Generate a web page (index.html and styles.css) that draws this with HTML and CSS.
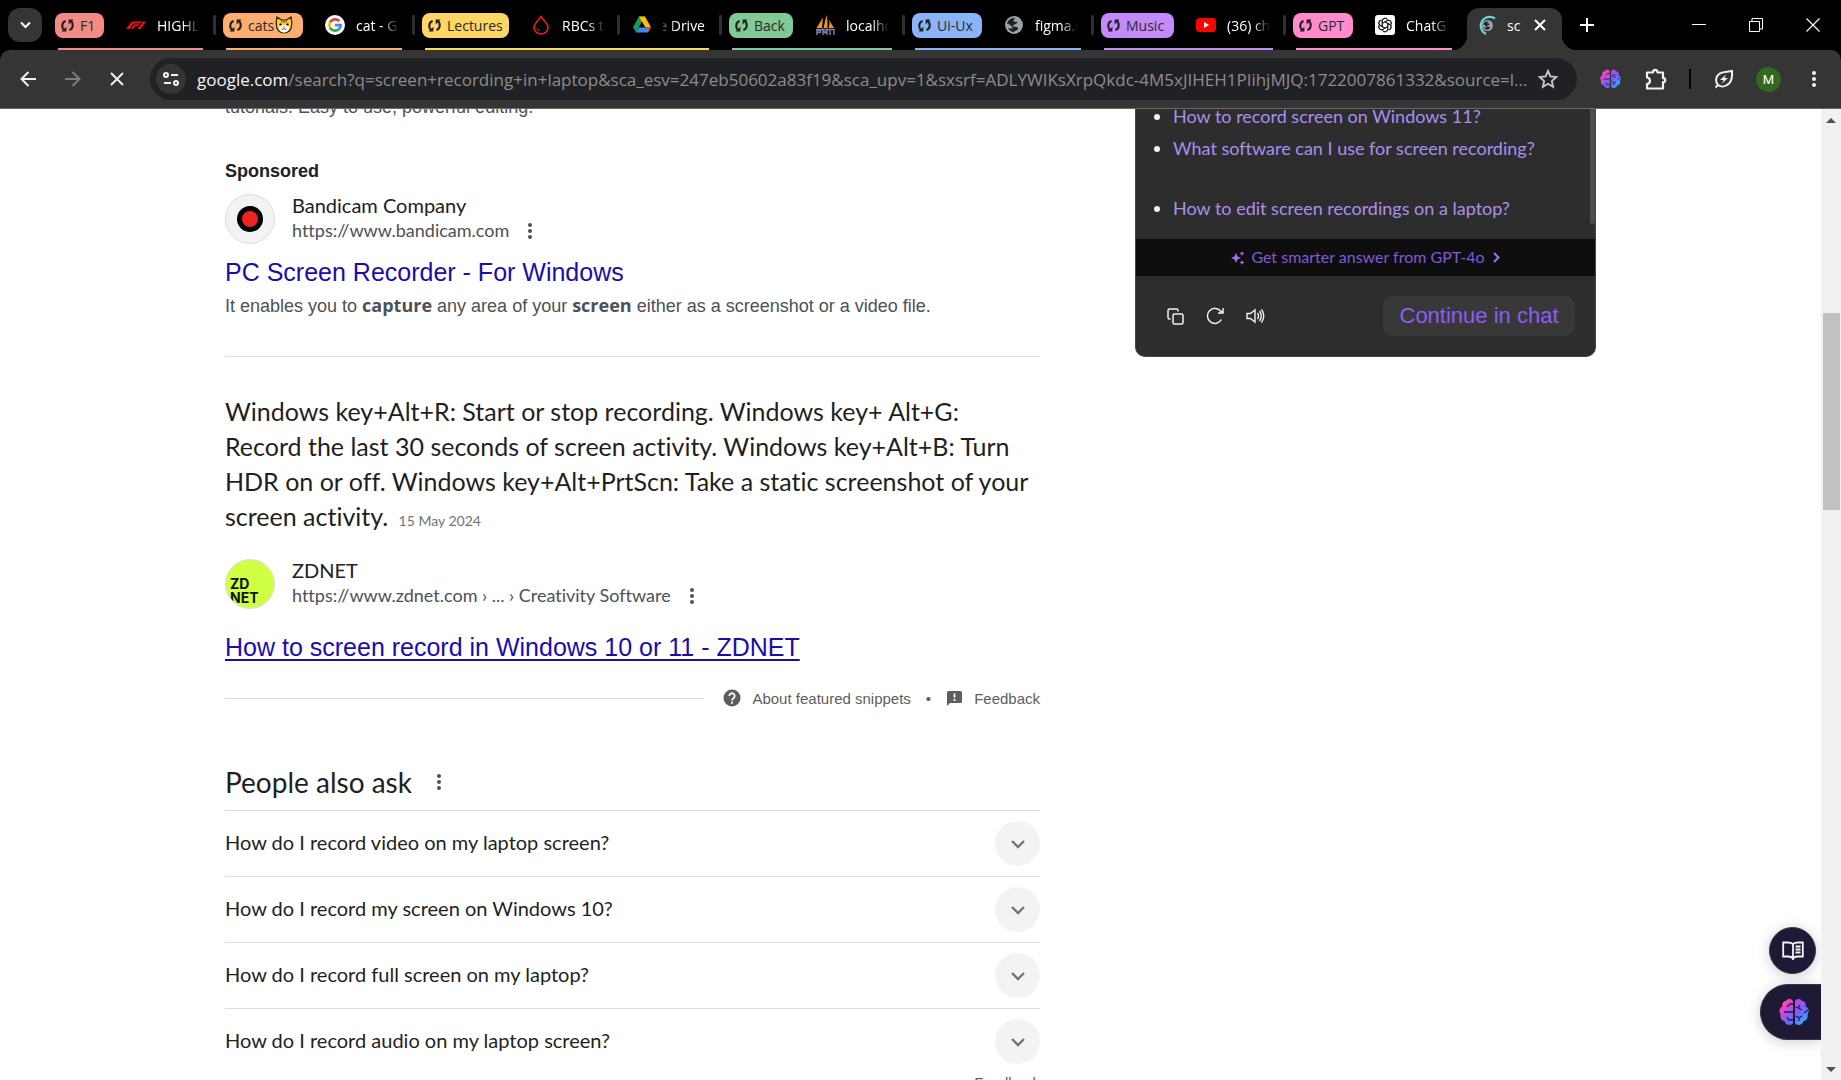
FILE: index.html
```html
<!DOCTYPE html>
<html lang="en">
<head>
<meta charset="utf-8">
<title>screen recording in laptop - Google Search</title>
<link rel="stylesheet" href="styles.css">
</head>
<body>
<svg class="defs" aria-hidden="true">
  <defs>
    <linearGradient id="brain-l" x1="0" y1="0" x2="0.5" y2="1"><stop offset="0" stop-color="#ff9a1f"/><stop offset="0.35" stop-color="#f43fc4"/><stop offset="1" stop-color="#5b6bff"/></linearGradient>
    <linearGradient id="brain-r" x1="0" y1="0" x2="0.6" y2="1"><stop offset="0" stop-color="#d63fe8"/><stop offset="0.5" stop-color="#7a5cff"/><stop offset="1" stop-color="#2fb4ff"/></linearGradient>
    <symbol id="sync" viewBox="0 0 16 16"><g fill="none" stroke="#202124" stroke-width="2.2"><path d="M6 3.2C1.6 4.6 1.400 10.500 4.600 13"/><path d="M10 12.800C14.400 11.400 14.600 5.500 11.400 3"/></g><path d="M1.600 14.300h5.200V9.200zM14.400 1.700H9.200v5.100z" fill="#202124"/></symbol>
    <symbol id="brain" viewBox="0 0 30 28"><path fill="url(#brain-l)" d="M14 3C12 0 8 .5 7 3 4 3 2.500 6 3.500 8.500 0 10-.5 14 1.500 16c-1 4 1.500 7 4 7 1 4 6.500 5.500 8.500 2z"/><path fill="url(#brain-r)" d="M16 3c2-3 6-2.500 7 0 3 0 4.500 3 3.500 5.500C30 10 30.500 14 28.500 16c1 4-1.500 7-4 7-1 4-6.500 5.500-8.500 2z"/><g fill="none" stroke="#2a1a4a" stroke-width="1.300"><path d="M14 6h-3l-3 3M14 14H5M14 22h-4l-2-3M16.500 9l3 1 1-3M19.500 10l3 2M17 18l3 2 3-2M20 20v3M29 12l-4 3"/></g></symbol>
    <symbol id="globe" viewBox="0 0 18 18"><circle cx="9" cy="9" r="9" fill="#9aa0a6"/><path fill="#202124" d="M2 7.500C3 3.500 7 1.500 10.500 2 9 3 8 4 9 5.500c1 1 2-.5 3 .5s-1 2-2.500 2.500S7 10 9 10.500c2 .5 4 0 4 2s-3 2-4 3.500c-3 0-5-2-6-4 1.500.5 3.500 1 4.500 0S5 9.500 4.500 8.500 3 8 2 7.500z"/></symbol>
    <symbol id="more" viewBox="0 0 6 20"><g fill="currentColor"><circle cx="3" cy="4" r="2"/><circle cx="3" cy="10" r="2"/><circle cx="3" cy="16" r="2"/></g></symbol>
    <symbol id="down" viewBox="0 0 16 10"><path d="M2 2l6 6 6-6" fill="none" stroke="currentColor" stroke-width="2.400"/></symbol>
  </defs>
</svg>

<header class="browser">
  <div class="tabstrip">
    <button class="tab-search" aria-label="Search tabs"><svg width="11" height="8" viewBox="0 0 11 8"><path d="M1 1.500l4.500 4.500L10 1.500" fill="none" stroke="#fff" stroke-width="2"/></svg></button>

    <div class="group red w49">
      <button class="chip"><svg class="sync"><use href="#sync"/></svg>F1</button>
      <button class="tab"><svg class="fav" viewBox="0 0 20 20"><path fill="#f01008" d="M0 14L5 7.500Q6 6.500 8 6.500h8L14 8.500H8.500Q7.500 8.500 7 9.300L3.500 14zM4.800 14l3-3.800Q8.500 9.300 9.800 9.300h3.700L12 11H9.500L7 14zM14.500 14L20 6.500h-3L11.500 14z"/></svg><span class="title">HIGHLI</span></button>
    </div>
    <div class="group orange w80">
      <button class="chip"><svg class="sync"><use href="#sync"/></svg>cats<svg class="cat" viewBox="0 0 18 18"><path d="M2 1l4.500 3h5L16 1c1 4 1 6 .5 9 0 4-3.500 7-7.500 7s-7.500-3-7.500-7C1 7 1 5 2 1z" fill="#fdc935" stroke="#2b2110" stroke-width="1.200"/><path d="M9 9c-4 0-6 2-5 4s3 3.500 5 3.500 4-1.500 5-3.500-1-4-5-4z" fill="#fff"/><circle cx="5.500" cy="8.500" r="1.100"/><circle cx="12.500" cy="8.500" r="1.100"/><path d="M7.800 10.500h2.400L9 12z" fill="#c55"/><path d="M6.500 13q1.200 1 2.500-.5 1.300 1.500 2.500.5M9 4.500v2.500M6.800 4.800v1.700M11.200 4.800v1.700" fill="none" stroke="#2b2110" stroke-width=".8"/></svg></button>
      <button class="tab"><svg class="fav" viewBox="0 0 20 20"><circle cx="10" cy="10" r="10" fill="#fff"/><g fill="none" stroke-width="2.700"><path d="M14.200 6.200A5.700 5.700 0 0 0 5 7.400" stroke="#ea4335"/><path d="M5 7.400a5.700 5.700 0 0 0 0 5.200" stroke="#fbbc05"/><path d="M5 12.600a5.700 5.700 0 0 0 8.800 1.600" stroke="#34a853"/><path d="M13.800 14.200A5.500 5.500 0 0 0 15.600 10.200H10" stroke="#4285f4"/></g></svg><span class="title">cat - G</span></button>
    </div>
    <div class="group yellow w87">
      <button class="chip"><svg class="sync"><use href="#sync"/></svg>Lectures</button>
      <button class="tab"><svg class="fav" viewBox="0 0 20 20"><path d="M10 1.500C7 6 3 8.500 3 12.500a7 6.500 0 0 0 14 0C17 8.500 12.500 6 10 1.500z" fill="none" stroke="#ec1c24" stroke-width="1.600"/><path d="M6 13q.5 2.500 3 3" fill="none" stroke="#ec1c24"/></svg><span class="title">RBCs t</span></button>
      <button class="tab second"><svg class="fav" viewBox="0 0 20 20"><path d="M7 1.500h6L7 12 4 17.500 1 12.300z" fill="#0f9d58"/><path d="M7 1.500h6l6 10.700h-6z" fill="#fbbc04"/><path d="M7 12.200h12l-3 5.300H4z" fill="#4285f4"/><path d="M16 12.200h3l-3 5.300z" fill="#ea4335"/><path d="M10 7l-3 5.200h6z" fill="#000"/></svg><span class="title fade-start">e Drive</span></button>
    </div>
    <div class="group green w64">
      <button class="chip"><svg class="sync"><use href="#sync"/></svg>Back</button>
      <button class="tab"><svg class="fav" viewBox="0 0 20 20"><path d="M1.500 13L8 2.500 7 13zM8.500 13L11.500 0q1.500 6 1 13zM13.500 13q2-5 0-9l5.500 9z" fill="#f7941d"/><path d="M1 14.500h18M2 14v6M2 15.500h3.500v2H2M8 20v-5l2 3 2-3v5M15 14v6M19 14v6" fill="none" stroke="#7a78ad" stroke-width="1.500"/></svg><span class="title">localho</span></button>
    </div>
    <div class="group blue w69">
      <button class="chip"><svg class="sync"><use href="#sync"/></svg>Ui-Ux</button>
      <button class="tab"><svg class="fav"><use href="#globe" x="1" y="1" width="18" height="18"/></svg><span class="title">figma.c</span></button>
    </div>
    <div class="group purple w73">
      <button class="chip"><svg class="sync"><use href="#sync"/></svg>Music</button>
      <button class="tab"><svg class="fav" viewBox="0 0 20 20"><rect y="3" width="20" height="14" rx="3.500" fill="#f00"/><path d="M8 7l5 3-5 3z" fill="#fff"/></svg><span class="title">(36) ch</span></button>
    </div>
    <div class="group pink w60">
      <button class="chip"><svg class="sync"><use href="#sync"/></svg>GPT</button>
      <button class="tab"><svg class="fav" viewBox="0 0 20 20"><rect width="20" height="20" rx="3" fill="#fff"/><g fill="none" stroke="#222" stroke-width="1"><path id="petal" d="M7.300 11.500V6a2.900 2.900 0 0 1 5.400-1.400M7.300 8.300L12 5.600a2.800 2.800 0 0 1 4 3.300"/><use href="#petal" transform="rotate(60 10 10)"/><use href="#petal" transform="rotate(120 10 10)"/><use href="#petal" transform="rotate(180 10 10)"/><use href="#petal" transform="rotate(240 10 10)"/><use href="#petal" transform="rotate(300 10 10)"/></g></svg><span class="title">ChatGP</span></button>
    </div>

    <div class="active-tab">
      <svg class="fav" viewBox="0 0 20 20"><use href="#globe" x="5" y="5" width="11" height="11"/><path d="M18 3.500A9 9 0 1 0 9 19" fill="none" stroke="#6fd3e6" stroke-width="2.200"/></svg>
      <span class="title">sc</span>
      <button class="close" aria-label="Close tab"><svg width="12" height="12" viewBox="0 0 12 12"><path d="M1 1l10 10M11 1L1 11" stroke="#fff" stroke-width="2"/></svg></button>
    </div>
    <button class="new-tab" aria-label="New tab"><svg width="14" height="14" viewBox="0 0 14 14"><path d="M7 0v14M0 7h14" stroke="#fff" stroke-width="2"/></svg></button>
    <div class="window-controls">
      <button aria-label="Minimise"><svg width="14" height="14" viewBox="0 0 14 14"><path d="M0 6.500h14" stroke="#fff"/></svg></button>
      <button aria-label="Restore"><svg width="14" height="14" viewBox="0 0 14 14"><path d="M.5 3.500h10v10H.5zM3 3.500v-3h10.500V11h-3" fill="none" stroke="#fff"/></svg></button>
      <button aria-label="Close"><svg width="14" height="14" viewBox="0 0 14 14"><path d="M.5.500l13 13M13.500.500l-13 13" stroke="#fff" stroke-width="1.200"/></svg></button>
    </div>
  </div>

  <div class="toolbar">
    <nav class="nav-buttons">
      <button aria-label="Back"><svg width="16" height="16" viewBox="0 0 16 16"><path d="M16 8H2M8.500 1L1.500 8l7 7" fill="none" stroke="#f1f1f1" stroke-width="2"/></svg></button>
      <button aria-label="Forward"><svg width="16" height="16" viewBox="0 0 16 16"><path d="M0 8h14M7.500 1l7 7-7 7" fill="none" stroke="#7c7c7c" stroke-width="2"/></svg></button>
      <button aria-label="Stop"><svg width="14" height="14" viewBox="0 0 14 14"><path d="M1 1l12 12M13 1L1 13" stroke="#f1f1f1" stroke-width="2"/></svg></button>
    </nav>
    <div class="omnibox">
      <button class="site-info" aria-label="Site information"><svg width="16" height="14" viewBox="0 0 16 14"><g fill="none" stroke="#f1f1f1" stroke-width="2"><circle cx="3" cy="3" r="2"/><path d="M8 3h7M1 11h7"/><circle cx="13" cy="11" r="2"/></g></svg></button>
      <label class="host" for="url">google.com</label>
      <input id="url" class="url" type="text" value="/search?q=screen+recording+in+laptop&amp;sca_esv=247eb50602a83f19&amp;sca_upv=1&amp;sxsrf=ADLYWIKsXrpQkdc-4M5xJIHEH1PIihjMJQ:1722007861332&amp;source=l...">
      <button class="star" aria-label="Bookmark"><svg width="20" height="20" viewBox="0 0 20 20"><path d="M10 2l2.400 5.400 5.900.6-4.400 4 1.200 5.800L10 14.800l-5.100 3 1.200-5.800-4.400-4 5.900-.6z" fill="none" stroke="#c7c7c7" stroke-width="1.900"/></svg></button>
    </div>
    <div class="actions">
      <button aria-label="Assistant extension"><svg width="21" height="20"><use href="#brain"/></svg></button>
      <button aria-label="Extensions"><svg width="22" height="22" viewBox="0 0 22 22"><path d="M2 4.500h6C8 1 12.500 1 12.500 4.500H18v5.700c3 0 3 4 0 4V20.500H2V16c4-.5 4-6 0-6.500z" fill="none" stroke="#f1f1f1" stroke-width="2.200" stroke-linejoin="round"/></svg></button>
      <span class="divider"></span>
      <button aria-label="Energy saver"><svg width="20" height="20" viewBox="0 0 20 20"><path d="M4 16C1 12.500 1.500 8 5 5c3-2.500 8-2 13-3 .5 5.500-.5 10-3 12.500-3 3-7.500 4-11 1.500zm0 0l-2.500 2.500" fill="none" stroke="#f1f1f1" stroke-width="2"/><path d="M12 5.500l-6 5.500h3.500L8 14.500 14 9h-3.500z" fill="#f1f1f1"/></svg></button>
      <button class="avatar">M</button>
      <button class="menu" aria-label="Menu"><svg width="6" height="20"><use href="#more"/></svg></button>
    </div>
  </div>
</header>

<div class="viewport">
  <main class="results">
    <p class="snippet-tail">tutorials. Easy to use, powerful editing.</p>
    <section class="ad">
      <h2 class="sponsored">Sponsored</h2>
      <div class="source">
        <svg class="logo" viewBox="0 0 50 50"><circle cx="25" cy="25" r="24.500" fill="#f1f3f4" stroke="#dadce0"/><circle cx="25" cy="25" r="13"/><circle cx="25" cy="25" r="8" fill="#ee2324"/></svg>
        <div class="source-text">
          <span class="site">Bandicam Company</span>
          <span class="link-line">https://www.bandicam.com<button class="dots gap18" aria-label="About this result"><svg width="6" height="20"><use href="#more"/></svg></button></span>
        </div>
      </div>
      <h3 class="headline"><a href="#">PC Screen Recorder - For Windows</a></h3>
      <p class="desc">It enables you to <b>capture</b> any area of your <b>screen</b> either as a screenshot or a video file.</p>
    </section>
    <section class="featured">
      <p class="answer">Windows key+Alt+R: Start or stop recording. Windows key+ Alt+G:<br>Record the last 30 seconds of screen activity. Windows key+Alt+B: Turn<br>HDR on or off. Windows key+Alt+PrtScn: Take a static screenshot of your<br>screen activity. <time>15 May 2024</time></p>
      <div class="source">
        <div class="logo zdnet"><span>ZD</span><span>NET</span></div>
        <div class="source-text">
          <span class="site">ZDNET</span>
          <span class="link-line">https://www.zdnet.com › ... › Creativity Software<button class="dots gap18" aria-label="About this result"><svg width="6" height="20"><use href="#more"/></svg></button></span>
        </div>
      </div>
      <h3 class="headline underlined"><a href="#">How to screen record in Windows 10 or 11 - ZDNET</a></h3>
      <div class="about">
        <span class="rule"></span>
        <svg width="18" height="18" viewBox="0 0 18 18"><circle cx="9" cy="9" r="8.500" fill="#5e5e5e"/><path d="M6.300 7a2.700 2.700 0 1 1 4.200 2.200Q9 10 9 11.500M9 12.800v1.900" fill="none" stroke="#fff" stroke-width="1.800"/></svg>
        <a href="#">About featured snippets</a>
        <span class="bullet">•</span>
        <svg class="flag" width="15" height="15" viewBox="0 0 15 15"><path d="M0 15V1.500Q0 0 1.500 0h12Q15 0 15 1.500v9q0 1.500-1.500 1.500H3z" fill="#5e5e5e"/><path d="M7.500 2.500v4M7.500 8v2" stroke="#fff" stroke-width="1.800"/></svg>
        <a href="#">Feedback</a>
      </div>
    </section>
    <section class="paa">
      <h2>People also ask<button class="dots gap24" aria-label="About these results"><svg width="6" height="20"><use href="#more"/></svg></button></h2>
      <button class="question"><span class="label">How do I record video on my laptop screen?</span><span class="expand"><svg width="16" height="10"><use href="#down"/></svg></span></button>
      <button class="question"><span class="label">How do I record my screen on Windows 10?</span><span class="expand"><svg width="16" height="10"><use href="#down"/></svg></span></button>
      <button class="question"><span class="label">How do I record full screen on my laptop?</span><span class="expand"><svg width="16" height="10"><use href="#down"/></svg></span></button>
      <button class="question"><span class="label">How do I record audio on my laptop screen?</span><span class="expand"><svg width="16" height="10"><use href="#down"/></svg></span></button>
      <a class="feedback" href="#">Feedback</a>
    </section>
  </main>

  <aside class="assistant">
    <div class="scroll-area">
      <ul>
        <li><a href="#">How to record screen on Windows 11?</a></li>
        <li><a href="#">What software can I use for screen recording?</a></li>
        <li class="spaced"><a href="#">How to edit screen recordings on a laptop?</a></li>
      </ul>
      <span class="mini-thumb"></span>
    </div>
    <button class="smarter"><svg width="14" height="14" viewBox="0 0 14 14"><path d="M5 2l1.500 3.500L10 7 6.500 8.500 5 12 3.500 8.500 0 7l3.500-1.500zM11 0l.8 1.700 1.700.8-1.700.8L11 5l-.8-1.700-1.700-.8 1.700-.8zM11 9l.8 1.700 1.700.8-1.700.8L11 14l-.8-1.700-1.700-.8 1.700-.8z" fill="#a56bfa"/></svg><span class="label">Get smarter answer from GPT-4o</span><svg class="next" width="7" height="11" viewBox="0 0 7 11"><path d="M1 1l4.500 4.500L1 10" fill="none" stroke="#a56bfa" stroke-width="2"/></svg></button>
    <div class="panel-foot">
      <button aria-label="Copy"><svg width="17" height="17" viewBox="0 0 17 17"><g fill="none" stroke="#f1f1f1" stroke-width="1.500"><rect x="6" y="6" width="10" height="10" rx="1.500"/><path d="M3.500 11H2.500Q1 11 1 9.500v-7Q1 1 2.500 1h7Q11 1 11 2.500v1"/></g></svg></button>
      <button aria-label="Regenerate"><svg width="18" height="18" viewBox="0 0 18 18"><path d="M15.500 12.500A7.500 7.500 0 1 1 14.800 4.200L17 6M17 1v5h-5" fill="none" stroke="#f1f1f1" stroke-width="1.500"/></svg></button>
      <button aria-label="Read aloud"><svg width="19" height="16" viewBox="0 0 19 16"><path d="M1 5.500h3.500L9 2v12l-4.500-3.500H1zM11.500 5q2 3 0 6M13.500 3q3.500 5 0 10M15.500 1.500q4.500 6.500 0 13" fill="none" stroke="#f1f1f1" stroke-width="1.400"/></svg></button>
      <button class="continue">Continue in chat</button>
    </div>
  </aside>

  <button class="float-read" aria-label="Reading mode"><svg width="22" height="20" viewBox="0 0 22 20"><path d="M11 3Q9 1.500 6 1.500H1.200v14H6.500q3 0 4.500 2 1.500-2 4.500-2h5.300v-14H16q-3 0-5 1.500zV19M13.500 5.500h5M13.500 8.500h5M13.500 11.500h5" fill="none" stroke="#f4f4f8" stroke-width="1.800"/></svg></button>
  <button class="float-chat" aria-label="Open assistant"><svg width="30" height="28"><use href="#brain"/></svg></button>

  <div class="scrollbar"><span class="arrow up"></span><span class="thumb"></span><span class="arrow down"></span></div>
</div>
</body>
</html>
```
FILE: styles.css
```css
* { box-sizing: border-box; }
body {
  margin: 0;
  height: 100vh;
  display: flex;
  flex-direction: column;
  overflow: hidden;
  background: #fff;
  font-family: "Liberation Sans", Arial, sans-serif;
  font-variant-ligatures: none;
}
button { margin: 0; padding: 0; border: 0; background: none; font: inherit; color: inherit; }
button svg { display: block; }
a { color: inherit; text-decoration: none; }
h2, h3, p, ul { margin: 0; padding: 0; font-weight: 400; }
.defs { position: absolute; width: 0; height: 0; }

/* Tab strip */
.browser { flex: none; background: #000; font-family: "Open Sans", "Noto Sans", sans-serif; }
.tabstrip { display: flex; height: 50px; padding-left: 8px; color: #fff; font-size: 14px; }
.tab-search { width: 34px; height: 34px; margin: 8px 13px 0 0; border-radius: 12px; background: #353535; display: grid; place-items: center; }
.group { position: relative; display: flex; align-items: center; flex: none; padding-right: 4px; margin-right: 20px; }
.group::before { content: ""; position: absolute; left: 3px; right: 0; bottom: 0; height: 2px; background: var(--tint); }
.group::after { content: ""; position: absolute; right: -13px; top: 15px; width: 3px; height: 20px; border-radius: 1px; background: #2f2f2f; }
.group.pink::after { display: none; }
.group.pink { margin-right: 15px; }
.chip { display: flex; align-items: center; flex: none; height: 25px; padding-left: 5px; border-radius: 8px; background: var(--tint); color: #2b2b2b; white-space: nowrap; }
.sync { width: 15px; height: 15px; margin-right: 5px; }
.cat { width: 18px; height: 18px; margin-left: 1px; }
.red { --tint: #f28b82; }
.orange { --tint: #fcad70; }
.yellow { --tint: #fdd663; }
.green { --tint: #81c995; }
.blue { --tint: #8ab4f8; }
.purple { --tint: #c58af9; }
.pink { --tint: #ff8bcb; }
.w49 .chip { width: 49px; }
.w80 .chip { width: 80px; }
.w87 .chip { width: 87px; }
.w64 .chip { width: 64px; }
.w69 .chip { width: 70px; }
.w73 .chip { width: 73px; }
.w60 .chip { width: 60px; }
.tab { position: relative; display: flex; align-items: center; height: 50px; padding-left: 22px; }
.tab.second { padding-left: 28px; }
.tab.second::before { content: ""; position: absolute; left: 13px; top: 15px; width: 3px; height: 20px; border-radius: 1px; background: #2f2f2f; }
.fav { width: 20px; height: 20px; flex: none; }
.tab .title { width: 42px; margin-left: 11px; overflow: hidden; white-space: nowrap; text-align: left; mask-image: linear-gradient(to right, #000 26px, transparent 43px); }
.tab .fade-start { display: flex; justify-content: flex-end; mask-image: linear-gradient(to right, transparent -6px, #000 14px); }
.active-tab { position: relative; display: flex; align-items: center; width: 95px; height: 42px; margin-top: 8px; padding: 0 16px 8px 10px; border-radius: 12px 12px 0 0; background: #353535; }
.active-tab::before, .active-tab::after { content: ""; position: absolute; bottom: 0; width: 14px; height: 14px; }
.active-tab::before { right: 100%; background: radial-gradient(circle at 0 0, transparent 14px, #353535 14px); }
.active-tab::after { left: 100%; background: radial-gradient(circle at 100% 0, transparent 14px, #353535 14px); }
.active-tab .title { margin-left: 10px; }
.active-tab .close { margin-left: auto; }
.new-tab { padding: 0 18px; }
.window-controls { display: flex; margin-left: auto; }
.window-controls button { width: 57px; display: grid; place-items: center; }

/* Toolbar */
.toolbar { display: flex; align-items: center; height: 59px; padding: 0 24px 0 19px; border-radius: 10px 10px 0 0; background: #353535; border-bottom: 1px solid #696969; }
.nav-buttons { display: flex; gap: 27px; width: 107px; margin-right: 24px; }
.nav-buttons button { width: 18px; height: 18px; display: grid; place-items: center; }
.omnibox { flex: 1; display: flex; align-items: center; height: 42px; min-width: 0; padding: 0 19px 0 6px; border-radius: 21px; background: #202124; font-size: 17px; }
.site-info { width: 30px; height: 30px; margin-right: 11px; border-radius: 50%; background: #353535; display: grid; place-items: center; flex: none; }
.host { color: #f5f5f5; }
.url { flex: 1; min-width: 0; padding: 0; border: 0; outline: 0; background: none; color: #8c8d8f; font: inherit; }
.star { margin-left: 8px; }
.actions { display: flex; align-items: center; margin-left: 23px; }
.divider { width: 2px; height: 20px; margin: 0 -1px 0 22px; background: #000; }
.actions button + button, .divider + button { margin-left: 24px; }
.actions .avatar { width: 25px; height: 25px; margin-left: 22px; border-radius: 50%; background: #33691e; color: #fff; font-family: Roboto, sans-serif; font-size: 13px; }
.actions .menu { color: #f1f1f1; margin-left: 30px; }

/* Page */
.viewport { position: relative; flex: 1; min-height: 0; display: flex; align-items: flex-start; overflow: hidden; }
.results { width: 815px; margin: -16px 95px 0 225px; flex: none; color: #1f1f1f; }
.snippet-tail, .desc { font-size: 18px; line-height: 28px; color: #4d5156; }
.sponsored { margin-top: 38px; font-size: 18px; font-weight: 700; line-height: 24px; color: #202124; }
.source { display: flex; align-items: center; height: 50px; }
.ad .source { margin-top: 11px; }
.logo { width: 50px; height: 50px; flex: none; margin-right: 17px; }
.zdnet { display: flex; flex-direction: column; justify-content: flex-end; padding: 0 0 3px 4px; border: 1px solid #dadce0; border-radius: 50%; background: #d0ff43; color: #111; overflow: hidden; font: 700 14px/14px Inter, sans-serif; }
.source-text { display: flex; flex-direction: column; padding-bottom: 2px; font-family: Lato, "Open Sans", sans-serif; }
.site { font-size: 20px; line-height: 25px; color: #202124; }
.link-line { display: flex; align-items: center; font-size: 18px; line-height: 25px; color: #4d5156; white-space: nowrap; }
.dots { color: #4d5156; }
.gap18 { margin-left: 18px; }
.gap24 { margin-left: 24px; }
.headline { font-size: 25px; line-height: 32px; color: #1a0dab; }
.ad .headline { margin-top: 12px; }
.desc { margin-top: 4px; padding-bottom: 36px; border-bottom: 1px solid #dadce0; }
.desc b { font-family: "Open Sans", sans-serif; line-height: 20px; }
.answer { margin-top: 37px; font-family: Lato, sans-serif; font-size: 25px; line-height: 35px; white-space: nowrap; }
.answer time { margin-left: 4px; font-size: 14px; color: #70757a; }
.featured .source { margin-top: 21px; }
.underlined { margin-top: 22px; }
.underlined a { text-decoration: underline; text-decoration-thickness: 2px; text-underline-offset: 3px; }
.about { display: flex; align-items: center; height: 24px; margin-top: 23px; font-size: 15px; color: #5e5e5e; white-space: nowrap; }
.rule { flex: 1; height: 1px; margin-right: 19px; background: #dadce0; }
.about a { margin-left: 11px; }
.bullet { margin: 0 16px 0 15px; }
.flag + a { margin-left: 12px; }
.paa { margin-top: 52px; font-family: Lato, sans-serif; }
.paa h2 { display: flex; align-items: center; height: 48px; padding-bottom: 9px; font-size: 28px; }
.question { display: flex; align-items: center; justify-content: space-between; width: 100%; height: 66px; border-top: 1px solid #dadce0; font-size: 20px; text-align: left; }
.label { padding-bottom: 3px; }
.expand { width: 45px; height: 45px; border-radius: 50%; background: #f1f3f4; color: #70757a; display: grid; place-items: center; }
.feedback { display: block; text-align: right; font: 15px/18px "Liberation Sans", sans-serif; color: #5e5e5e; }

/* Assistant panel */
.assistant { width: 461px; flex: none; border: 1px solid #424549; border-top: 0; border-radius: 0 0 10px 10px; background: #2d2d2d; overflow: hidden; font-family: Lato, sans-serif; }
.scroll-area { position: relative; height: 130px; overflow: hidden; }
.assistant ul { margin-top: -9px; padding-left: 37px; color: #f1f1f1; font-size: 18px; line-height: 32px; }
.assistant li a { color: #ab8ff0; }
.assistant .spaced { margin-top: 28px; }
.mini-thumb { position: absolute; right: 0; top: 0; width: 5px; height: 115px; border-radius: 0 0 3px 3px; background: #4d4d4d; }
.smarter { display: flex; align-items: center; justify-content: center; gap: 6px; width: 100%; height: 37px; background: #0e0e0e; color: #8258dc; font-size: 16px; }
.next { margin-left: 2px; }
.panel-foot { display: flex; align-items: center; gap: 22px; height: 80px; padding: 0 20px 0 31px; }
.continue { width: 192px; height: 40px; margin-left: auto; border-radius: 10px; background: #383838; color: #8e5cf3; font: 22px "Liberation Sans", sans-serif; }

/* Floating buttons and scrollbar */
.float-read, .float-chat { position: absolute; display: grid; place-items: center; background: #1e1935; border: 1px solid #3a3648; box-shadow: 0 2px 14px rgba(0, 0, 0, .2); }
.float-read { right: 25px; bottom: 106px; width: 47px; height: 47px; border-radius: 50%; }
.float-chat { right: 20px; bottom: 40px; width: 61px; height: 56px; padding-left: 6px; border-right: 0; border-radius: 28px 0 0 28px; }
.scrollbar { position: absolute; top: 0; right: 0; bottom: 0; width: 20px; background: #f1f1f1; display: flex; flex-direction: column; align-items: center; }
.arrow { width: 0; height: 0; border: 5px solid transparent; }
.up { margin-top: 4px; border-bottom-color: #505050; }
.down { margin: auto 0 3px; border-top-color: #505050; }
.thumb { width: 17px; height: 197px; margin-top: 190px; background: #c1c1c1; }
```
